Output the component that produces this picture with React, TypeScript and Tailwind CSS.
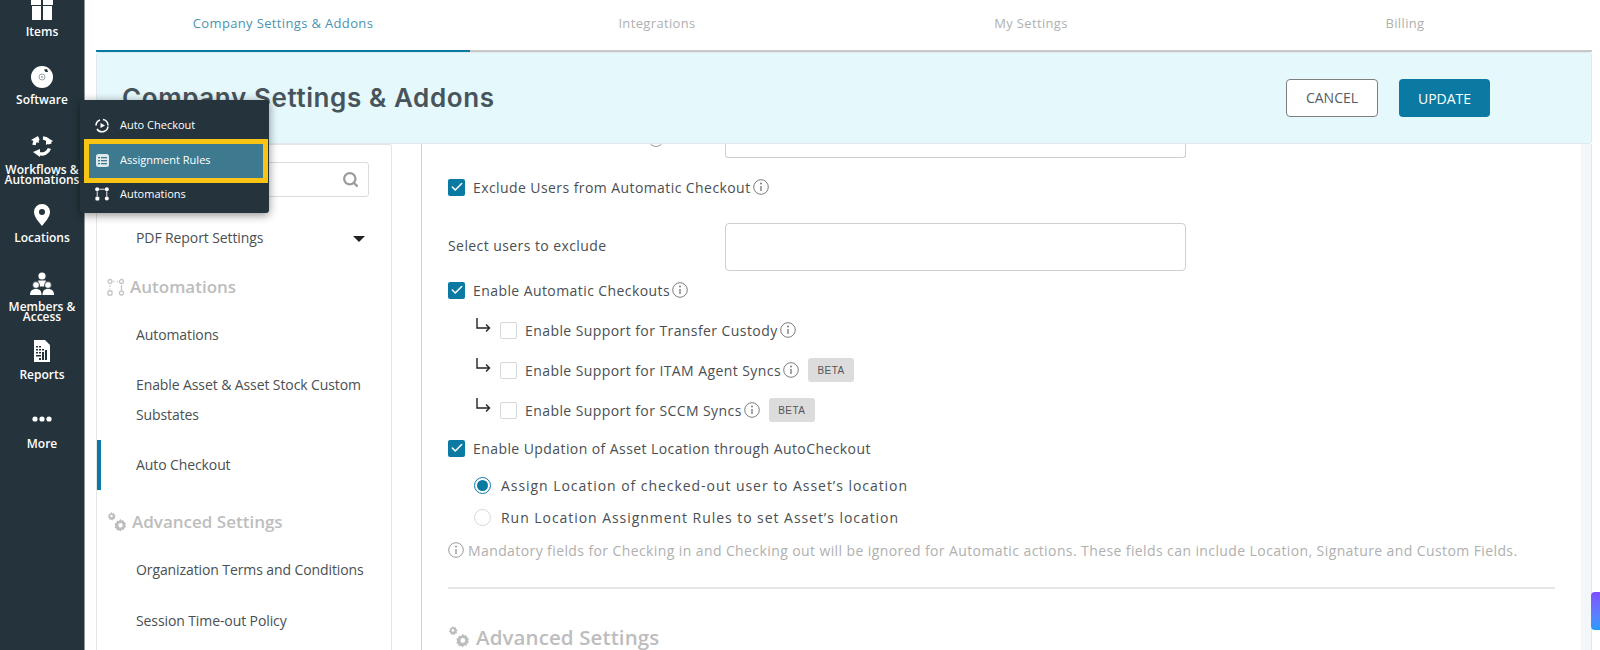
import React from 'react';
import { Search, Check } from 'lucide-react';

const SANS = "font-['Open_Sans','Noto_Sans',sans-serif]";

const GiftIcon = () => (
  <svg width="24" height="20" viewBox="0 0 24 20" fill="#fff">
    <rect x="1" y="0" width="10" height="5" />
    <rect x="13" y="0" width="10" height="5" />
    <rect x="2" y="6" width="9" height="14" />
    <rect x="13" y="6" width="9" height="14" />
  </svg>
);

const DiscIcon = () => (
  <svg width="22" height="22" viewBox="0 0 22 22">
    <circle cx="11" cy="11" r="11" fill="#fff" />
    <circle cx="11" cy="11" r="3" fill="none" stroke="#9aa3a8" strokeWidth="1" />
    <circle cx="11" cy="11" r="1" fill="#9aa3a8" />
    <path d="M13 3.5 L16 3 L17 6 L14.5 6 Z" fill="#25343c" />
  </svg>
);

const CycleIcon = () => (
  <svg width="22" height="22" viewBox="0 0 22 22" fill="none" stroke="#fff" strokeWidth="3.4">
    <path d="M3 10 A8 8 0 0 1 8 3.4" />
    <path d="M12 3 A8 8 0 0 1 19 9" />
    <path d="M18.4 13.5 A8 8 0 0 1 8 18.5" />
    <path d="M0 5 L7 1 L8 8 Z" fill="#fff" strokeWidth="0" />
    <path d="M15 2 L22 6 L15 10 Z" fill="#fff" strokeWidth="0" />
    <path d="M9 14 L9 22 L2 17 Z" fill="#fff" strokeWidth="0" />
  </svg>
);

const PinIcon = () => (
  <svg width="16" height="22" viewBox="0 0 16 22">
    <path fillRule="evenodd" fill="#fff" d="M8 0a8 8 0 0 1 8 8c0 5-5 10-8 14C5 18 0 13 0 8a8 8 0 0 1 8-8Zm0 5a3 3 0 1 0 0 6 3 3 0 0 0 0-6Z" />
  </svg>
);

const MembersIcon = () => (
  <svg width="24" height="24" viewBox="0 0 24 24" fill="#fff">
    <circle cx="12" cy="4" r="3.6" />
    <path d="M8 8.5h8l-2 6h-4Z" />
    <circle cx="6" cy="13" r="3.4" stroke="#25343c" strokeWidth="0.8" />
    <circle cx="18" cy="13" r="3.4" stroke="#25343c" strokeWidth="0.8" />
    <path d="M0 23c0-4 2-6 6-6s5.5 2 5.5 6Z" />
    <path d="M12.5 23c0-4 1.500-6 5.500-6s6 2 6 6Z" />
  </svg>
);

const ReportIcon = () => (
  <svg width="18" height="22" viewBox="0 0 18 22">
    <path d="M1 0h11l5 5v17H1Z" fill="#fff" />
    <g fill="#25343c">
      <rect x="3" y="6" width="2" height="1.5" />
      <rect x="6" y="6" width="2" height="1.5" />
      <rect x="3" y="9" width="2" height="1.5" />
      <rect x="6" y="9" width="2" height="1.5" />
      <rect x="9" y="9" width="2" height="1.5" />
      <rect x="3" y="12" width="2" height="1.5" />
      <rect x="6" y="12" width="2" height="1.5" />
      <rect x="9" y="12" width="2" height="8" />
      <rect x="12" y="10" width="2" height="10" />
      <rect x="3" y="15" width="5" height="1.5" />
      <rect x="6" y="18" width="2" height="2" />
    </g>
  </svg>
);

const DotsIcon = () => (
  <svg width="20" height="6" viewBox="0 0 20 6" fill="#fff">
    <circle cx="3" cy="3" r="2.6" />
    <circle cx="10" cy="3" r="2.6" />
    <circle cx="17" cy="3" r="2.6" />
  </svg>
);

const FlowIcon = () => (
  <svg width="16" height="16" viewBox="0 0 16 16" fill="#fff">
    <circle cx="2.500" cy="2.500" r="2.300" />
    <circle cx="13.500" cy="2.500" r="2.300" />
    <rect x="0.500" y="11" width="4.400" height="4.400" rx="1" />
    <circle cx="13.500" cy="13.200" r="2.300" />
    <rect x="5" y="2" width="6" height="1" />
    <rect x="2" y="5" width="1" height="6" />
    <rect x="13" y="5" width="1" height="6" />
  </svg>
);

const FlowOutlineIcon = () => (
  <svg width="18" height="18" viewBox="0 0 18 18" fill="none" stroke="#c4c4c4" strokeWidth="1.300">
    <circle cx="3" cy="3.500" r="2" />
    <circle cx="14.500" cy="3.500" r="2" />
    <rect x="1" y="13" width="4" height="4" rx="0.500" />
    <circle cx="14.500" cy="15" r="2" />
    <path d="M6.500 3.500h1M10 3.500h1M3 7.500v1.500M3 10.500v1M14.500 7v5" />
  </svg>
);

const GearsIcon = ({ size = 20 }: { size?: number }) => (
  <svg width={size} height={size} viewBox="0 0 20 20" fill="#bdbdbd">
    <path fillRule="evenodd" d="M4.500 0l1 1.400 1.600-.3.300 1.600 1.400 1-1 1.400.3 1.600-1.600.3-1 1.400-1.400-1-1.600.3-.3-1.600L.8 5.100l1-1.400-.3-1.600 1.600-.3Zm0 2.800a1.200 1.200 0 1 0 0 2.400 1.200 1.200 0 0 0 0-2.400Z" />
    <path fillRule="evenodd" d="M13.500 7l1.200 1.600 2-.2.600 1.900 1.700 1-.7 1.900.7 1.900-1.700 1-.6 1.900-2-.2-1.200 1.600-1.600-1.200-2 .2-.6-1.900-1.700-1 .7-1.900-.7-1.900 1.700-1 .6-1.900 2 .2Zm0 4a2.200 2.200 0 1 0 0 4.400 2.200 2.200 0 0 0 0-4.400Z" />
  </svg>
);

const RailItem = ({ icon, label, className }: { icon: React.ReactNode; label: React.ReactNode; className: string }) => (
  <div className={`flex flex-col items-center text-white text-[12px] font-semibold leading-[10px] text-center ${className}`}>
    {icon}
    {label}
  </div>
);

const Rail = () => (
  <nav className="w-[84px] shrink-0 bg-[#25343c] flex flex-col h-full">
    <RailItem className="h-[66px]" icon={<GiftIcon />} label={<span className="mt-[7px]">Items</span>} />
    <RailItem className="h-[78px]" icon={<DiscIcon />} label={<span className="mt-[7px]">Software</span>} />
    <RailItem className="h-[62px] mt-[-10px] pt-[1px]" icon={<CycleIcon />} label={<span className="mt-[8px]">Workflows &<br />Automations</span>} />
    <RailItem className="h-[68px] mt-[8px]" icon={<PinIcon />} label={<span className="mt-[7px]">Locations</span>} />
    <RailItem className="h-[68px]" icon={<MembersIcon />} label={<span className="mt-[6px]">Members &<br />Access</span>} />
    <RailItem className="h-[68px]" icon={<ReportIcon />} label={<span className="mt-[8px]">Reports</span>} />
    <RailItem className="h-[68px] pt-[8px]" icon={<DotsIcon />} label={<span className="mt-[17px]">More</span>} />
  </nav>
);

const MenuRow = ({ icon, label, className }: { icon: React.ReactNode; label: string; className: string }) => (
  <div className={`flex items-center gap-[11px] text-white text-[11px] font-medium ${className}`}>
    <span className="w-[14px] flex justify-center">{icon}</span>
    {label}
  </div>
);

const PopMenu = () => (
  <div className="absolute left-[80px] top-[100px] w-[189px] h-[113px] rounded-[3px] bg-[#25343c] shadow-[0_2px_10px_rgba(0,0,0,0.45)] flex flex-col">
    <MenuRow
      className="h-[39px] pt-[11px] pl-[15px]"
      label="Auto Checkout"
      icon={
        <svg width="15" height="15" viewBox="0 0 14 14" fill="none" stroke="#fff" strokeWidth="1.600">
          <path d="M1 7a6 6 0 0 1 4-5.600M8 1a6 6 0 0 1 5 6M13 8a6 6 0 0 1-11 2.500" />
          <path d="M5.500 4.500 L10 7 L5.500 9.500 Z" fill="#fff" stroke="none" />
        </svg>
      }
    />
    <MenuRow
      className="h-[44px] ml-[4px] mr-[1px] pl-[6px] pb-[1px] bg-[#3e7a8f] border-[5px] border-[#f9c414]"
      label="Assignment Rules"
      icon={
        <svg width="13" height="13" viewBox="0 0 13 13">
          <rect width="13" height="13" rx="2.500" fill="#dfe9ec" />
          <g fill="#3e7a8f">
            <rect x="2" y="3" width="2" height="1.300" />
            <rect x="5" y="3" width="6" height="1.300" />
            <rect x="2" y="6" width="2" height="1.300" />
            <rect x="5" y="6" width="6" height="1.300" />
            <rect x="2" y="9" width="2" height="1.300" />
            <rect x="5" y="9" width="6" height="1.300" />
          </g>
        </svg>
      }
    />
    <MenuRow className="h-[22px] pl-[15px]" label="Automations" icon={<FlowIcon />} />
  </div>
);

const Tabs = () => (
  <div className="h-[52px] flex text-[13px] tracking-[0.35px]">
    {['Company Settings & Addons', 'Integrations', 'My Settings', 'Billing'].map((tab, i) => (
      <div
        key={tab}
        className={`flex-1 flex items-center justify-center pb-[3px] border-b-2 ${i === 0 ? 'border-[#0a7aa3] text-[#4b93ae]' : 'border-[#c8c8c8] text-[#b0b0b0]'}`}
      >
        {tab}
      </div>
    ))}
  </div>
);

const SideLink = ({ children, active }: { children: React.ReactNode; active?: boolean }) => (
  <div className={`text-[14px] leading-[30px] tracking-[-0.1px] text-[#4a4f52] pr-[4px] py-[10px] ${active ? 'border-l-4 border-[#0a7aa3] pl-[35px]' : 'pl-[39px]'}`}>
    {children}
  </div>
);

const SideHeading = ({ icon, children }: { icon: React.ReactNode; children: React.ReactNode }) => (
  <div className="flex items-center gap-[5px] pl-[10px] text-[#bdbdbd] text-[17px] font-semibold leading-[26px]">
    {icon}
    {children}
  </div>
);

const SidePanel = () => (
  <aside className="w-[296px] shrink-0 bg-white border-x border-t border-[#e3e6e8] rounded-t-[3px] h-full overflow-hidden">
    <div className="mt-[17px] ml-[12px] mr-[22px] h-[35px] border border-[#dcdcdc] rounded-[3px] flex items-center justify-end pr-[9px]">
      <Search size={17} strokeWidth={3.200} color="#9b9b9b" />
    </div>
    <div className="flex items-center justify-between text-[14px] tracking-[-0.1px] text-[#4a4f52] pl-[39px] pr-[26px] mt-[28px] h-[24px]">
      PDF Report Settings
      <span className="w-0 h-0 border-x-[6px] border-x-transparent border-t-[6px] border-t-[#222] mt-[4px]" />
    </div>
    <div className="mt-[25px]">
      <SideHeading icon={<FlowOutlineIcon />}>Automations</SideHeading>
    </div>
    <div className="mt-[10px]">
      <SideLink>Automations</SideLink>
      <SideLink>Enable Asset & Asset Stock Custom Substates</SideLink>
      <SideLink active>Auto Checkout</SideLink>
    </div>
    <div className="mt-[19px]">
      <SideHeading icon={<GearsIcon />}>Advanced Settings</SideHeading>
    </div>
    <div className="mt-[10px]">
      <SideLink>Organization Terms and Conditions</SideLink>
      <div className="mt-[1px]">
        <SideLink>Session Time-out Policy</SideLink>
      </div>
    </div>
  </aside>
);

const InfoDot = ({ color = '#7d7d7d' }: { color?: string }) => (
  <svg width="16" height="16" viewBox="0 0 16 16" fill="none" className="shrink-0">
    <circle cx="8" cy="8" r="7.300" stroke={color} strokeWidth="1" />
    <circle cx="8" cy="4.600" r="1" fill={color} />
    <path d="M8 7v5" stroke={color} strokeWidth="1.400" />
  </svg>
);

const CheckBox = ({ checked }: { checked?: boolean }) => (
  <span className={`w-[17px] h-[17px] shrink-0 rounded-[2px] flex items-center justify-center ${checked ? 'bg-[#0a7aa3]' : 'border border-[#d8d8d8] bg-white'}`}>
    {checked && <Check size={14} strokeWidth={2.600} color="#fff" />}
  </span>
);

const Beta = ({ className }: { className: string }) => (
  <span className={`h-[24px] w-[46px] rounded-[3px] bg-[#dcdcdc] text-[#555] text-[10px] font-['Liberation_Sans',sans-serif] flex items-center justify-center ${className}`}>
    BETA
  </span>
);

const CheckRow = ({ label, checked, info, className }: { label: string; checked?: boolean; info?: boolean; className?: string }) => (
  <div className={`flex items-center h-[24px] ${className ?? ''}`}>
    <CheckBox checked={checked} />
    <span className="ml-[8px] mr-[2px]">{label}</span>
    {info && <InfoDot />}
  </div>
);

const ElbowArrow = () => (
  <svg width="15" height="15" viewBox="0 0 15 15" fill="none" stroke="#222" strokeWidth="1.400" className="shrink-0 mt-[-9px] mr-[9px] ml-[2px]">
    <path d="M1 0v10h12" />
    <path d="M10 6.500 L13.500 10 L10 13.500" />
  </svg>
);

const SubRow = ({ label, className, beta }: { label: string; className: string; beta?: string }) => (
  <div className={`flex items-center h-[24px] ml-[26px] ${className}`}>
    <ElbowArrow />
    <CheckBox />
    <span className="ml-[8px] mr-[2px]">{label}</span>
    <InfoDot />
    {beta && <Beta className={beta} />}
  </div>
);

const Radio = ({ label, selected, className }: { label: string; selected?: boolean; className?: string }) => (
  <div className={`flex items-center h-[24px] ml-[26px] tracking-[0.95px] ${className ?? ''}`}>
    <span className={`w-[17px] h-[17px] rounded-full shrink-0 flex items-center justify-center bg-white border ${selected ? 'border-[#0a7aa3]' : 'border-[#d8d8d8]'}`}>
      {selected && <span className="w-[11px] h-[11px] rounded-full bg-[#0a7aa3]" />}
    </span>
    <span className="ml-[10px]">{label}</span>
  </div>
);

const ContentPanel = () => (
  <section className="flex-1 min-w-0 bg-white border-l border-[#cfcfcf] h-full overflow-hidden flex">
    <div className="flex-1 min-w-0 pl-[26px] pr-[26px] text-[14px] text-[#4a4f52] tracking-[0.42px]">
      <div className="flex h-[14px] relative">
        <span className="absolute left-[200px] top-[-13px] w-[16px] h-[16px] rounded-full border border-[#9a9a9a]" />
        <div className="ml-[277px] w-[461px] h-[14px] border-x border-b border-[#cfcfcf] rounded-b-[3px]" />
      </div>
      <CheckRow className="mt-[17px]" checked info label="Exclude Users from Automatic Checkout" />
      <div className="flex items-center mt-[24px]">
        <span className="w-[277px] shrink-0 pb-[4px]">Select users to exclude</span>
        <div className="w-[461px] h-[48px] border border-[#cfcfcf] rounded-[4px]" />
      </div>
      <CheckRow className="mt-[7px]" checked info label="Enable Automatic Checkouts" />
      <SubRow className="mt-[16px]" label="Enable Support for Transfer Custody" />
      <SubRow className="mt-[16px]" label="Enable Support for ITAM Agent Syncs" beta="ml-[9px]" />
      <SubRow className="mt-[16px]" label="Enable Support for SCCM Syncs" beta="ml-[9px]" />
      <CheckRow className="mt-[14px]" checked label="Enable Updation of Asset Location through AutoCheckout" />
      <Radio className="mt-[13px]" selected label="Assign Location of checked-out user to Asset’s location" />
      <Radio className="mt-[8px]" label="Run Location Assignment Rules to set Asset’s location" />
      <div className="flex items-center gap-[4px] mt-[9px] h-[24px] text-[#b0b0b0] text-[14px] tracking-[0.4px]">
        <InfoDot color="#9a9a9a" />
        <span className="whitespace-nowrap">Mandatory fields for Checking in and Checking out will be ignored for Automatic actions. These fields can include Location, Signature and Custom Fields.</span>
      </div>
      <div className="h-[2px] bg-[#e6e6e6] mt-[25px]" />
      <div className="flex items-center gap-[6px] mt-[34px] text-[#bdbdbd] text-[20.5px] font-semibold leading-[28px] tracking-[0.1px]">
        <GearsIcon size={22} />
        Advanced Settings
      </div>
    </div>
    <div className="w-[11px] shrink-0 bg-[#f4f7fa] border-r border-[#e3e6e8]" />
  </section>
);

export default function App() {
  return (
    <div className={`relative flex h-[650px] w-[1600px] overflow-hidden bg-white ${SANS}`}>
      <Rail />
      <main className="flex-1 min-w-0 flex flex-col pl-[11px] pr-[8px] border-l border-[#8f9699]">
        <Tabs />
        <div className="h-[92px] shrink-0 bg-[#e5f8fc] border border-[#dfe9ec] rounded-[3px] flex items-center justify-between pl-[25px] pr-[101px]">
          <h1 className="font-['Inter',sans-serif] text-[26px] font-semibold text-[#48545b] tracking-[0.6px] pb-[2px]">Company Settings & Addons</h1>
          <div className="flex gap-[21px]">
            <button className="w-[92px] h-[38px] pb-[2px] rounded-[4px] bg-white border border-[#7f7f7f] text-[14px] text-[#555b60]">CANCEL</button>
            <button className="w-[91px] h-[38px] rounded-[4px] bg-[#0a7aa3] text-[14px] text-white">UPDATE</button>
          </div>
        </div>
        <div className="flex-1 min-h-0 flex gap-[29px]">
          <SidePanel />
          <ContentPanel />
        </div>
      </main>
      <div className="absolute right-0 top-[592px] w-[9px] h-[38px] rounded-l-[4px] bg-gradient-to-b from-[#7c4dff] to-[#1e9bff]" />
      <PopMenu />
    </div>
  );
}
